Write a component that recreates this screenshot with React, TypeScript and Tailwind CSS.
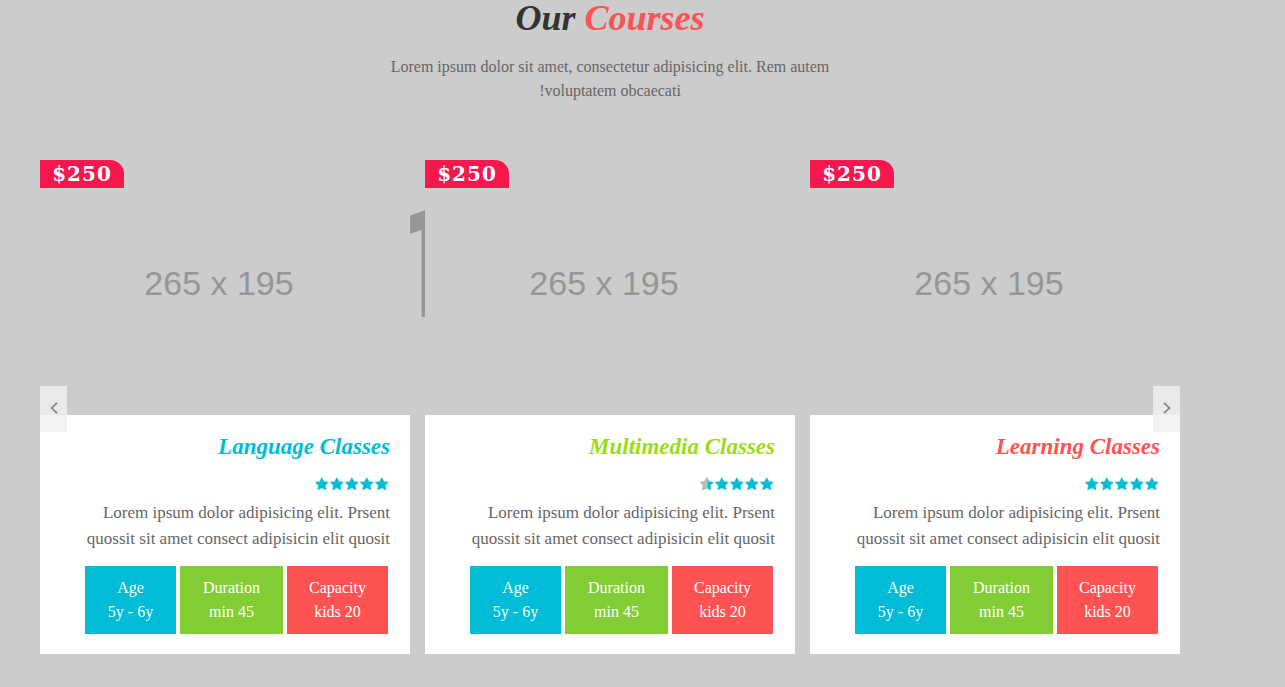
type Course = { title: string; color: string; halfStar: boolean };

const courses: Course[] = [
  { title: "Language Classes", color: "text-[#00bcd6]", halfStar: false },
  { title: "Multimedia Classes", color: "text-[#98dc1c]", halfStar: true },
  { title: "Learning Classes", color: "text-[#ff5353]", halfStar: false },
];

const stats = [
  { label: "Age", value: "5y - 6y", style: "w-[91px] bg-[#00bcd6]" },
  { label: "Duration", value: "min 45", style: "w-[103px] bg-[#82cd34]" },
  { label: "Capacity", value: "kids 20", style: "w-[101px] bg-[#ff5353]" },
];

const STAR =
  "M7 0.5 L9.1 4.6 L13.6 5.3 L10.4 8.5 L11.2 13 L7 10.9 L2.8 13 L3.6 8.5 L0.4 5.3 L4.9 4.6 Z";

function Star({ half }: { half: boolean }) {
  return (
    <svg viewBox="0 -0.2 14.4 14.4" className="h-[14px] w-[14px]" aria-hidden="true">
      <path d={STAR} fill="#00bcd6" stroke="#00bcd6" strokeWidth="0.7" strokeLinejoin="round" />
      {half && (
        <path
          d="M7 0.5 L7.6 1.7 L7.6 11.2 L7 10.9 L2.8 13 L3.6 8.5 L0.4 5.3 L4.9 4.6 Z"
          fill="#bdbdbd"
          stroke="#bdbdbd"
          strokeWidth="0.7"
          strokeLinejoin="round"
        />
      )}
    </svg>
  );
}

function CourseCard({ course }: { course: Course }) {
  return (
    <article className="relative bg-white">
      <div className="relative flex h-[255px] items-center justify-center bg-[#ccc] pr-3 pb-2">
        <span className="absolute top-0 left-0 flex h-7 w-[84px] items-center justify-center rounded-tr-[14px] bg-[#f6174f] font-['DejaVu_Serif',serif] text-xl font-bold tracking-wider text-white">
          $250
        </span>
        <span className="font-['Liberation_Sans',sans-serif] text-[34px] text-[#969696]">
          265 x 195
        </span>
      </div>
      <div className="px-5 pt-4 pb-5 text-right">
        <h3 className={`text-[23px] leading-8 font-bold italic ${course.color}`}>{course.title}</h3>
        <div
          role="img"
          aria-label={course.halfStar ? "4.5 out of 5" : "5 out of 5"}
          className="flex h-[37px] items-center justify-end gap-px pt-1 pr-px"
        >
          {[0, 1, 2, 3, 4].map((i) => (
            <Star key={i} half={course.halfStar && i === 0} />
          ))}
        </div>
        <p className="text-[17px] leading-[26px] text-[#666]">
          Lorem ipsum dolor adipisicing elit. Prsent
          <br />
          quossit sit amet consect adipisicin elit quosit
        </p>
        <dl className="mt-[14px] flex justify-end gap-1 pr-[2px] text-center text-base leading-6 text-white">
          {stats.map((s) => (
            <div key={s.label} className={`py-[10px] ${s.style}`}>
              <dt>{s.label}</dt>
              <dd>{s.value}</dd>
            </div>
          ))}
        </dl>
      </div>
    </article>
  );
}

function Arrow({ next }: { next: boolean }) {
  return (
    <button
      type="button"
      aria-label={next ? "Next courses" : "Previous courses"}
      className={`absolute top-[226px] flex h-[46px] w-[27px] items-center justify-center bg-[#f0f0f0]/80 pb-[2px] ${next ? "right-0" : "left-0"}`}
    >
      <svg viewBox="0 0 10 14" className="h-[14px] w-[10px]" fill="none" stroke="#808080" strokeWidth="1.7">
        <path d={next ? "M2 1.8 L7.4 7 L2 12.2" : "M8 1.8 L2.6 7 L8 12.2"} />
      </svg>
    </button>
  );
}

export default function App() {
  return (
    <main className="min-h-screen bg-[#ccc] pr-[105px] pb-8 pl-10 font-['Liberation_Serif',serif]">
      <header className="text-center">
        <h2 className="text-4xl leading-9 font-bold text-[#333] italic">
          Our <span className="text-[#ff5353]">Courses</span>
        </h2>
        <p className="pt-[19px] text-base leading-6 text-[#666]">
          Lorem ipsum dolor sit amet, consectetur adipisicing elit. Rem autem
          <br />
          !voluptatem obcaecati
        </p>
      </header>
      <section className="relative mt-[57px]">
        <div
          aria-hidden="true"
          className="absolute top-[23px] left-[calc((100%-30px)/3)] flex w-[15px] overflow-hidden font-['Roboto',sans-serif] text-[158px] leading-[160px] font-bold text-[#969696]"
        >
          <span className="-ml-7">1</span>
        </div>
        <div className="grid grid-cols-3 gap-[15px]">
          {courses.map((c) => (
            <CourseCard key={c.title} course={c} />
          ))}
        </div>
        <Arrow next={false} />
        <Arrow next />
      </section>
    </main>
  );
}
